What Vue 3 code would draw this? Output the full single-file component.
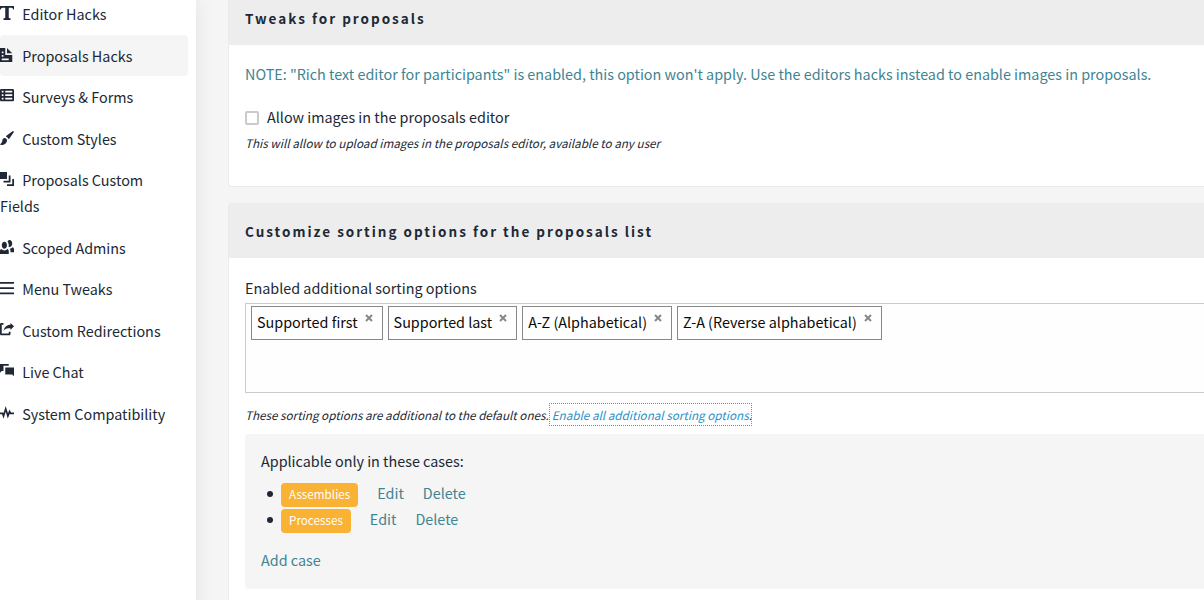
<script setup>
import { ref } from 'vue'

const navItems = [
  { label: 'Editor Hacks', path: 'M0 0v2h.5c0-.55.45-1 1-1h1.5v5.5c0 .28-.22.5-.5.5h-.5v1h4v-1h-.5c-.28 0-.5-.22-.5-.5v-5.5h1.5c.55 0 1 .45 1 1h.5v-2h-8z' },
  { label: 'Proposals Hacks', active: true, path: 'M0 0v8h7v-4h-4v-4h-3zm4 0v3h3l-3-3zm-3 2h1v1h-1v-1zm0 2h1v1h-1v-1zm0 2h4v1h-4v-1z' },
  { label: 'Surveys & Forms', path: 'M.75 0c-.41 0-.75.34-.75.75v5.5c0 .41.34.75.75.75h6.5c.41 0 .75-.34.75-.75v-5.5c0-.41-.34-.75-.75-.75h-6.5zm.25 1h1v1h-1v-1zm2 0h4v1h-4v-1zm-2 2h1v1h-1v-1zm2 0h4v1h-4v-1zm-2 2h1v1h-1v-1zm2 0h4v1h-4v-1z' },
  { label: 'Custom Styles', path: 'M7.44.03c-.03 0-.04.02-.06.03l-3.75 2.66c-.04.03-.1.11-.13.16l-.13.25c.72.23 1.27.78 1.5 1.5l.25-.13c.05-.03.12-.08.16-.13l2.66-3.75c.03-.05.04-.09 0-.13l-.44-.44c-.02-.02-.04-.03-.06-.03zm-4.78 3.97c-.74 0-1.31.61-1.31 1.34 0 .99-.55 1.85-1.34 2.31.39.22.86.34 1.34.34 1.47 0 2.66-1.18 2.66-2.66 0-.74-.61-1.34-1.34-1.34z' },
  { label: 'Proposals Custom Fields', path: 'M0 0v4h4v-4h-4zm5 2v3h-3v1h4v-4h-1zm2 2v3h-3v1h4v-4h-1z' },
  { label: 'Scoped Admins', path: 'M5.5 0c-.51 0-.95.35-1.22.88.45.54.72 1.28.72 2.13 0 .29-.03.55-.09.81.19.11.38.19.59.19.83 0 1.5-.9 1.5-2s-.67-2-1.5-2zm-3 1c-.83 0-1.5.9-1.5 2s.67 2 1.5 2 1.5-.9 1.5-2-.67-2-1.5-2zm4.75 3.16c-.43.51-1.02.82-1.69.84.27.38.44.84.44 1.34v.66h2v-1.66c0-.52-.31-.97-.75-1.19zm-6.5 1c-.44.22-.75.67-.75 1.19v1.66h5v-1.66c0-.52-.31-.97-.75-1.19-.45.53-1.06.84-1.75.84s-1.3-.32-1.75-.84z' },
  { label: 'Menu Tweaks', path: 'M0 .5v1h8v-1h-8zm0 3v1h8v-1h-8zm0 3v1h8v-1h-8z' },
  { label: 'Custom Redirections', path: 'M.75 0c-.41 0-.75.34-.75.75v5.5c0 .41.34.75.75.75h4.5c.41 0 .75-.34.75-.75v-1.25h-1v1h-4v-5h1v-1h-1.25zm5.25 0v1c-2.05 0-3.7 1.54-3.94 3.53.54-.88 1.53-1.53 2.66-1.53h1.28v1l2-2.16-2-1.84z' },
  { label: 'Live Chat', path: 'M0 0v5l1-1h1v-3h3v-1h-5zm3 2v4h4l1 1v-5h-5z' },
  { label: 'System Compatibility', path: 'M3.25 0l-.47 1.53-.78 2.56-.03-.06-.09-.34h-1.88v1h1.16l.38 1.16.47 1.47.47-1.5.78-2.5.78 2.5.41 1.34.53-1.28.59-1.47.13.28h2.31v-1h-1.69l-.38-.75-.5-.97-.41 1.03-.47 1.19-.84-2.66-.47-1.53z' },
]

const allowImages = ref(false)
const options = ref(['Supported first', 'Supported last', 'A-Z (Alphabetical)', 'Z-A (Reverse alphabetical)'])
const cases = ref(['Assemblies', 'Processes'])

const removeFrom = (list, item) => list.splice(list.indexOf(item), 1)
</script>

<template>
  <div class="page">
    <nav class="sidebar">
      <ul class="nav">
        <li v-for="item in navItems" :key="item.label">
          <a href="#" class="nav-link" :class="{ active: item.active }">
            <svg class="icon" viewBox="0 0 8 8" aria-hidden="true"><path :d="item.path" /></svg>
            {{ item.label }}
          </a>
        </li>
      </ul>
    </nav>

    <main class="content">
      <section class="card">
        <h2 class="card-title">Tweaks for proposals</h2>
        <div class="card-body">
          <p class="note">NOTE: "Rich text editor for participants" is enabled, this option won't apply. Use the editors hacks instead to enable images in proposals.</p>
          <label class="check">
            <input v-model="allowImages" type="checkbox">
            Allow images in the proposals editor
          </label>
          <p class="help">This will allow to upload images in the proposals editor, available to any user</p>
        </div>
      </section>

      <section class="card">
        <h2 class="card-title">Customize sorting options for the proposals list</h2>
        <div class="card-body">
          <p id="sort-label" class="field-label">Enabled additional sorting options</p>
          <ul class="tags" aria-labelledby="sort-label">
            <li v-for="option in options" :key="option" class="tag">
              {{ option }}
              <button type="button" class="remove" :aria-label="'Remove ' + option" @click="removeFrom(options, option)">
                <svg viewBox="0 0 8 8" aria-hidden="true"><path d="M1 1l6 6M7 1L1 7" /></svg>
              </button>
            </li>
          </ul>
          <p class="help">These sorting options are additional to the default ones.<a href="#" class="enable">Enable all additional sorting options</a>.</p>

          <div class="cases">
            <p>Applicable only in these cases:</p>
            <ul class="case-list">
              <li v-for="item in cases" :key="item" class="case">
                <span class="badge">{{ item }}</span>
                <a href="#">Edit</a>
                <a href="#" @click.prevent="removeFrom(cases, item)">Delete</a>
              </li>
            </ul>
            <a href="#">Add case</a>
          </div>
        </div>
      </section>
    </main>
  </div>
</template>

<style>
body {
  margin: 0;
  background: #f5f5f5;
  overflow: hidden;
}
</style>

<style scoped>
.page {
  display: flex;
  min-height: 100vh;
  font: 16px/26px "Noto Sans CJK SC", "Open Sans", sans-serif;
  font-size-adjust: 0.488;
  color: #202835;
  background: #f5f5f5;
}
.page * {
  box-sizing: border-box;
}
p,
ul,
h2 {
  margin: 0;
  padding: 0;
}
ul {
  list-style: none;
}
a {
  color: #3e8493;
  text-decoration: none;
}
.sidebar {
  flex: 0 0 196px;
  padding-right: 8px;
  background: #fff;
  box-shadow: 0 0 20px rgba(0, 0, 0, 0.08);
}
.nav {
  margin-top: -7px;
  line-height: 1.6;
}
.nav-link {
  display: block;
  padding: 8px 16px 8px 0;
  border-radius: 4px;
  color: #202835;
}
.nav-link.active {
  background: #f5f5f5;
}
.icon {
  width: 14px;
  height: 14px;
  margin-right: 5px;
  fill: #202835;
}
.content {
  flex: 1;
  min-width: 0;
  display: flex;
  flex-direction: column;
  gap: 16px;
  margin-top: -10px;
  padding-left: 32px;
}
.card {
  border: 1px solid #ebebeb;
  border-right: 0;
  border-radius: 4px 0 0 4px;
  background: #fff;
}
.card-title {
  padding: 14px 16px;
  background: #ededed;
  font-size: 15px;
  font-weight: 600;
  letter-spacing: 2px;
}
.card-body {
  padding: 16px 0 30px 16px;
}
.note {
  margin-bottom: 17px;
  color: #3e8493;
  white-space: nowrap;
}
.check {
  display: flex;
  align-items: center;
  gap: 8px;
}
.check input {
  appearance: none;
  width: 14px;
  height: 14px;
  margin: 1px 0 0;
  border: 2px solid #cacaca;
  border-radius: 2px;
  background: #fff;
}
.help {
  font-size: 13px;
  font-style: italic;
}
.field-label {
  margin-top: 17px;
}
.card-body:has(.field-label) {
  padding-top: 0;
}
.tags {
  display: flex;
  flex-wrap: wrap;
  align-content: flex-start;
  gap: 5px;
  min-height: 90px;
  margin: 2px 0 9px;
  padding: 2px 5px;
  border: 1px solid #cacaca;
  border-right: 0;
  background: #fefefe;
}
.tag {
  display: flex;
  height: 34px;
  padding: 2px 9px 4px 5px;
  border: 1px solid #888;
  color: #0a0a0a;
}
.remove {
  width: 8px;
  height: 8px;
  margin: 5px 0 0 7px;
  padding: 0;
  border: 0;
  background: none;
}
.remove svg {
  display: block;
  stroke: #888;
  stroke-width: 2;
}
.enable {
  margin: 0 -2px 0 1px;
  padding: 2px;
  outline: 1px dotted #888;
  color: #1f92cb;
}
.cases {
  margin-top: 6px;
  padding: 14px 16px 16px;
  border-radius: 4px 0 0 4px;
  background: #f5f5f5;
}
.case-list {
  margin: 6px 0 15px;
  padding-left: 6px;
}
.case {
  display: flex;
  gap: 19px;
  height: 26px;
}
.case::before {
  content: "";
  width: 6px;
  height: 6px;
  margin: 11px -11px 0 0;
  border-radius: 50%;
  background: #202835;
}
.badge {
  height: 24px;
  margin-top: 3px;
  padding: 0 8px;
  border-radius: 4px;
  background: #f9b233;
  color: #fefefe;
  font-size: 13px;
  line-height: 22px;
}
</style>
